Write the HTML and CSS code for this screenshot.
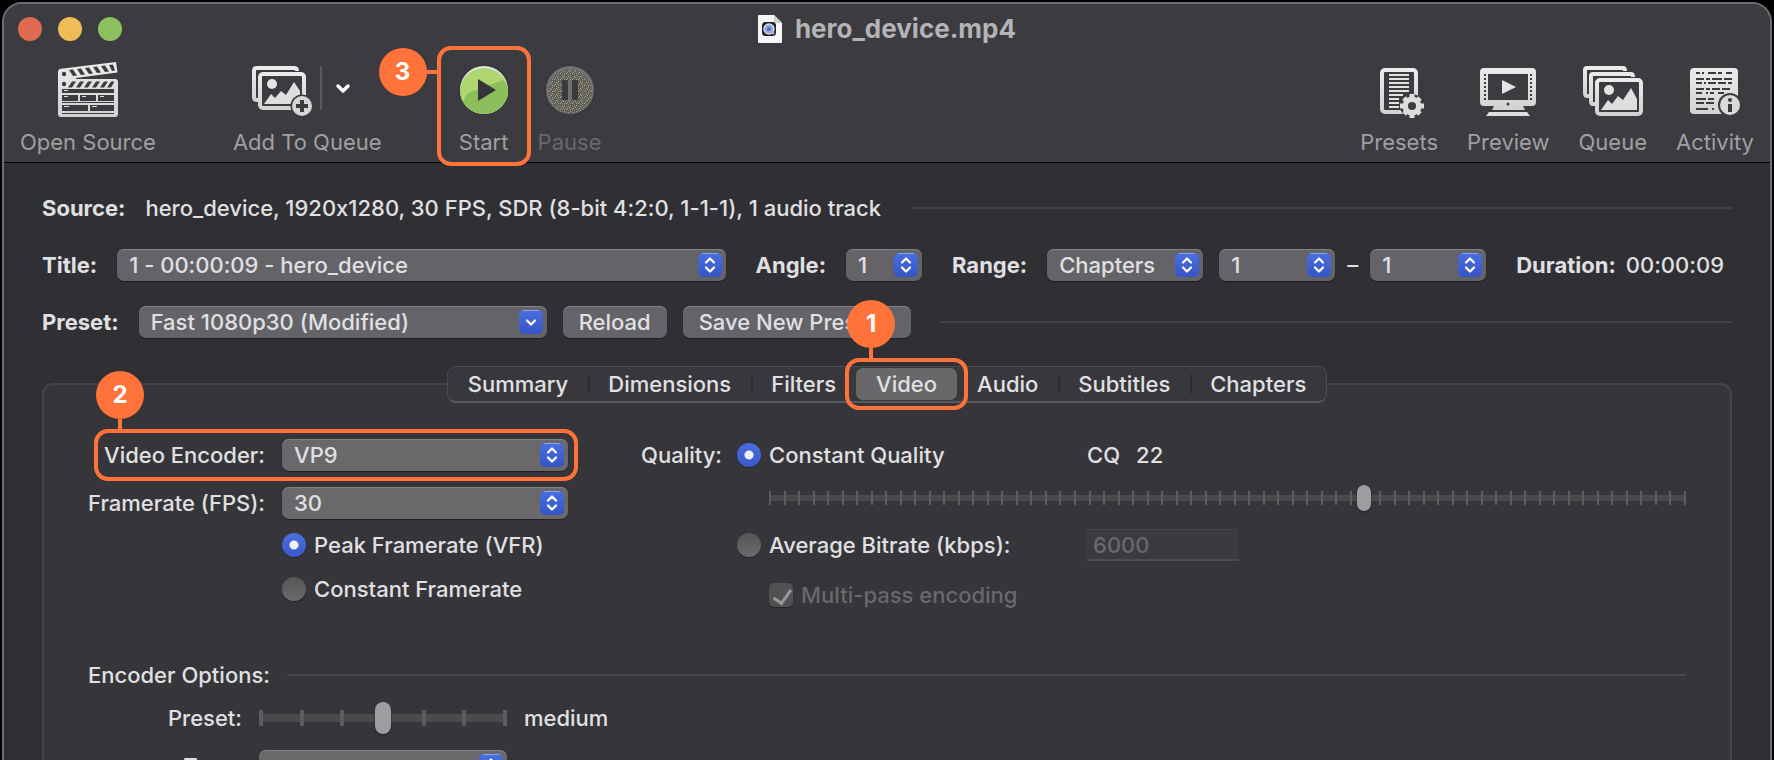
FILE: index.html
```html
<!DOCTYPE html>
<html lang="en">
<head>
    <meta charset="utf-8">
    <title>hero_device.mp4</title>
    <link rel="stylesheet" href="styles.css">
</head>
<body>
    <!-- Shared shapes -->
    <svg class="defs" width="0" height="0" aria-hidden="true">
        <defs>
            <linearGradient id="silver" x1="0" y1="0" x2="0" y2="1">
                <stop offset="0" stop-color="#ebebeb"/>
                <stop offset="1" stop-color="#d2d2d2"/>
            </linearGradient>
            <linearGradient id="blue" x1="0" y1="0" x2="0" y2="1">
                <stop offset="0" stop-color="#4a6fe0"/>
                <stop offset="1" stop-color="#3654c4"/>
            </linearGradient>
            <pattern id="speckle" width="6" height="6" patternUnits="userSpaceOnUse">
                <rect width="6" height="6" fill="#5e5e5c"/>
                <path fill="#8cbf5f" d="M0 0h1v1h-1zM3 2h1v1h-1zM1 4h1v1h-1z"/>
                <path fill="#b5684f" d="M2 0h1v1h-1zM5 3h1v1h-1zM3 5h1v1h-1z"/>
                <path fill="#a3a3a3" d="M4 1h1v1h-1zM1 2h1v1h-1zM5 5h1v1h-1z"/>
            </pattern>
            <symbol id="updown" viewBox="0 0 26 26">
                <rect x="1" y="1" width="24" height="24" rx="5" fill="url(#blue)"/>
                <path d="M5 1.500h16" stroke="#89a2ee"/>
                <path d="M9 10.500l4-4 4 4M9 15.500l4 4 4-4" fill="none" stroke="#fff" stroke-width="2.200" stroke-linecap="round" stroke-linejoin="round"/>
            </symbol>
            <symbol id="down" viewBox="0 0 26 26">
                <rect x="1" y="1" width="24" height="24" rx="5" fill="url(#blue)"/>
                <path d="M5 1.500h16" stroke="#89a2ee"/>
                <path d="M9 11.500l4 4 4-4" fill="none" stroke="#fff" stroke-width="2.200" stroke-linecap="round" stroke-linejoin="round"/>
            </symbol>
        </defs>
    </svg>

    <div class="window">
        <header class="header">
            <div class="titlebar">
                <div class="lights">
                    <button class="light close" aria-label="Close"></button>
                    <button class="light minimize" aria-label="Minimize"></button>
                    <button class="light zoom" aria-label="Zoom"></button>
                </div>
                <h1 class="title">
                    <svg width="24" height="28" viewBox="0 0 24 28" aria-hidden="true">
                        <path d="M0 1a1 1 0 0 1 1-1h15l8 8v19a1 1 0 0 1-1 1H1a1 1 0 0 1-1-1z" fill="#f6f6f6"/>
                        <path d="M16 0v8h8z" fill="#cfcfcf"/>
                        <rect x="4" y="7" width="14" height="14" rx="3.500" fill="#1f2126"/>
                        <circle cx="11" cy="14" r="5" fill="#8aa5dc" stroke="#d5dae2" stroke-width="1.500"/>
                        <path d="M11 14l5 5" stroke="#aab0bb" stroke-width="2.500"/>
                        <circle cx="11" cy="14" r="2" fill="#4c6fd2"/>
                    </svg>
                    hero_device.mp4
                </h1>
            </div>

            <div class="toolbar">
                <button class="tool">
                    <span class="tool-icon">
                        <svg width="60" height="56" viewBox="0 0 60 56" aria-hidden="true">
                            <path fill="url(#silver)" d="M0 10q0-3 3-3.300L58 0l1.500 10.500L18 16v1h39q3 0 3 3v32q0 3-3 3H3q-3 0-3-3z"/>
                            <circle cx="6" cy="12" r="2.200" fill="#3c3b3f"/>
                            <circle cx="6" cy="22" r="2.200" fill="#3c3b3f"/>
                            <path fill="#3c3b3f" d="M11 8l4-.5 4 6-4 .5zM19 7l4-.5 4 6-4 .5zM27 6l4-.5 4 6-4 .5zM35 5l4-.5 4 6-4 .5zM43 4l4-.5 4 6-4 .5zM51 3l4-.5 2 6-3 .5z"/>
                            <path fill="#3c3b3f" d="M14 19.500h4l-4 6h-4zM22 19.500h4l-4 6h-4zM30 19.500h4l-4 6h-4zM38 19.500h4l-4 6h-4zM46 19.500h4l-4 6h-4zM53 19.500h3v1l-3 5h-4z"/>
                            <path fill="#3c3b3f" d="M4 27h52v4H4zM4 33h16v6H4zM22 33h16v6H22zM40 33h16v6H40zM4 40h52v1H4zM4 43h26v6H4zM32 43h24v6H32zM4 51h52v1H4z"/>
                            <path stroke="#dedede" d="M6 28.500h4M6 34.500h4M24 34.500h4M42 34.500h4M6 44.500h5M34 44.500h5"/>
                        </svg>
                    </span>
                    Open Source
                </button>
                <button class="tool spaced">
                    <span class="tool-icon">
                        <svg width="110" height="56" viewBox="0 -4 110 56" aria-hidden="true">
                            <path d="M6 34H5q-3 0-3-3V5q0-3 3-3h37q3 0 3 3" fill="none" stroke="url(#silver)" stroke-width="4"/>
                            <rect x="8" y="8" width="44" height="34" rx="3" fill="#3c3b3f" stroke="url(#silver)" stroke-width="4"/>
                            <circle cx="20" cy="18" r="5" fill="#e4e4e4"/>
                            <path d="M12 38l7-10 4 4 6-7 5 4 8-13 6 9v13z" fill="#dedede"/>
                            <circle cx="50" cy="40" r="11.500" fill="#3c3b3f"/>
                            <circle cx="50" cy="40" r="10" fill="#d6d6d6"/>
                            <path d="M50 34v12M44 40h12" stroke="#3c3b3f" stroke-width="4"/>
                            <path d="M69 0v44" stroke="#5b5a5e" stroke-width="2"/>
                            <path d="M86 20l5 5 5-5" fill="none" stroke="#fff" stroke-width="3.500" stroke-linecap="round" stroke-linejoin="round"/>
                        </svg>
                    </span>
                    Add To Queue
                </button>
                <div class="callout callout-start spaced">
                    <button class="tool">
                        <span class="tool-icon">
                            <svg width="50" height="50" viewBox="0 0 50 50" aria-hidden="true">
                                <circle cx="25" cy="25" r="25" fill="#323135"/>
                                <circle cx="25" cy="25" r="24" fill="#e8e8e8"/>
                                <ellipse cx="25" cy="26" rx="24" ry="23" fill="#b0d672"/>
                                <path d="M4 37q2-10 16-13 15-6 25-9 8 12 1 22-8 12-21 12T4 37z" fill="#8cbf5c"/>
                                <path d="M19 14l18 11-18 11z" fill="#35343a"/>
                            </svg>
                        </span>
                        Start
                    </button>
                    <span class="badge">3</span>
                </div>
                <button class="tool" disabled>
                    <span class="tool-icon">
                        <svg width="50" height="50" viewBox="0 0 50 50" aria-hidden="true">
                            <circle cx="25" cy="25" r="25" fill="#353438"/>
                            <circle cx="25" cy="25" r="24" fill="#727274"/>
                            <circle cx="25" cy="26" r="22" fill="url(#speckle)"/>
                            <path d="M17 15h6v20h-6zM27 15h6v20h-6z" fill="#3b3a3e"/>
                            <path d="M23 15h4v20h-4z" fill="#707072"/>
                        </svg>
                    </span>
                    Pause
                </button>

                <div class="spacer"></div>

                <button class="tool">
                    <span class="tool-icon">
                        <svg width="50" height="56" viewBox="-3 -4 50 56" aria-hidden="true">
                            <rect x="5" y="4" width="34" height="42" rx="3" fill="none" stroke="url(#silver)" stroke-width="4"/>
                            <path d="M12 9h20M12 13h20M12 17h20M12 21h20M12 25h20M12 29h14M12 33h10M12 37h10M12 41h10" stroke="#e2e2e2" stroke-width="2"/>
                            <circle cx="35" cy="40" r="12" fill="#3c3b3f"/>
                            <path d="M35 28v24M23 40h24M27 32l16 16M43 32L27 48" stroke="#dcdcdc" stroke-width="5"/>
                            <circle cx="35" cy="40" r="7" fill="none" stroke="#dcdcdc" stroke-width="5"/>
                            <circle cx="35" cy="40" r="4" fill="#3c3b3f"/>
                        </svg>
                    </span>
                    Presets
                </button>
                <button class="tool">
                    <span class="tool-icon">
                        <svg width="56" height="52" viewBox="0 -4 56 52" aria-hidden="true">
                            <path fill="url(#silver)" fill-rule="evenodd" d="M4 0h48q4 0 4 4v30q0 4-4 4H43l2 4H12l2-4H4q-4 0-4-4V4q0-4 4-4zM8 6v26h40V6z"/>
                            <path d="M9 44h38l3 4H6z" fill="#dedede"/>
                            <path d="M22 12l14 7-14 7z" fill="#e4e4e4"/>
                            <path d="M5 6v26M51 6v26" stroke="#3c3b3f" stroke-width="2" stroke-dasharray="2 2"/>
                            <circle cx="28" cy="36" r="1.500" fill="#3c3b3f"/>
                        </svg>
                    </span>
                    Preview
                </button>
                <button class="tool">
                    <span class="tool-icon">
                        <svg width="60" height="52" viewBox="0 -2 60 52" aria-hidden="true">
                            <path d="M6 30H4q-2 0-2-3V4q0-2 2-2h36q2 0 2 3" fill="none" stroke="url(#silver)" stroke-width="4"/>
                            <path d="M12 38h-2q-2 0-2-3V10q0-2 2-2h38q2 0 2 3" fill="none" stroke="url(#silver)" stroke-width="4"/>
                            <rect x="14" y="14" width="44" height="34" rx="3" fill="#3c3b3f" stroke="url(#silver)" stroke-width="4"/>
                            <circle cx="26" cy="24" r="5" fill="#e4e4e4"/>
                            <path d="M18 44l7-10 4 4 6-8 5 4 8-12 6 11v11z" fill="#dedede"/>
                        </svg>
                    </span>
                    Queue
                </button>
                <button class="tool">
                    <span class="tool-icon">
                        <svg width="50" height="54" viewBox="0 -4 50 54" aria-hidden="true">
                            <rect x="0" y="1" width="48" height="46" rx="4" fill="url(#silver)"/>
                            <path d="M6 6h4M12 6h2M18 6h8M28 6h4M36 6h6M6 12h8M16 12h4M22 12h10M34 12h8M6 16h6M14 16h2M18 16h8M28 16h8M38 16h4M6 22h8M16 22h4M22 22h8M32 22h8M6 26h6M16 26h2M20 26h4M28 26h6M6 32h10M18 32h6M6 36h8M16 36h8M6 42h12M22 42h2" stroke="#3c3b3f" stroke-width="2"/>
                            <circle cx="40" cy="38" r="12" fill="#3c3b3f"/>
                            <circle cx="40" cy="38" r="10" fill="#dadada"/>
                            <circle cx="40" cy="33" r="2" fill="#3c3b3f"/>
                            <path d="M40 37v8" stroke="#3c3b3f" stroke-width="4"/>
                        </svg>
                    </span>
                    Activity
                </button>
            </div>
        </header>

        <main class="content">
            <div class="row">
                <b>Source:</b>
                <span>hero_device, 1920x1280, 30 FPS, SDR (8-bit 4:2:0, 1-1-1), 1 audio track</span>
                <hr>
            </div>

            <div class="row">
                <label for="title">Title:</label>
                <span class="popup grow">
                    <select id="title"><option>1 - 00:00:09 - hero_device</option></select>
                    <svg><use href="#updown"/></svg>
                </span>
                <label class="next" for="angle">Angle:</label>
                <span class="popup tiny">
                    <select id="angle"><option>1</option></select>
                    <svg><use href="#updown"/></svg>
                </span>
                <label class="next" for="range">Range:</label>
                <span class="popup medium">
                    <select id="range"><option>Chapters</option></select>
                    <svg><use href="#updown"/></svg>
                </span>
                <span class="popup small">
                    <select aria-label="First chapter"><option>1</option></select>
                    <svg><use href="#updown"/></svg>
                </span>
                <span class="dash">–</span>
                <span class="popup small">
                    <select aria-label="Last chapter"><option>1</option></select>
                    <svg><use href="#updown"/></svg>
                </span>
                <span class="duration"><b>Duration:</b><span>00:00:09</span></span>
            </div>

            <div class="row">
                <label for="preset">Preset:</label>
                <span class="popup preset">
                    <select id="preset"><option>Fast 1080p30 (Modified)</option></select>
                    <svg><use href="#down"/></svg>
                </span>
                <button class="push">Reload</button>
                <button class="push save">Save New Preset</button>
                <hr>
            </div>

            <nav class="tabs">
                <button class="tab">Summary</button>
                <button class="tab">Dimensions</button>
                <button class="tab">Filters</button>
                <div class="callout callout-tab">
                    <button class="tab selected">Video</button>
                    <span class="badge">1</span>
                </div>
                <button class="tab">Audio</button>
                <button class="tab">Subtitles</button>
                <button class="tab">Chapters</button>
            </nav>

            <section class="panel">
                <div class="columns">
                    <div class="encoder">
                        <div class="callout callout-encoder">
                            <label for="encoder">Video Encoder:</label>
                            <span class="popup">
                                <select id="encoder"><option>VP9</option></select>
                                <svg><use href="#updown"/></svg>
                            </span>
                            <span class="badge">2</span>
                        </div>
                        <label for="fps">Framerate (FPS):</label>
                        <span class="popup">
                            <select id="fps"><option>30</option></select>
                            <svg><use href="#updown"/></svg>
                        </span>
                        <label class="choice"><input type="radio" name="rate" checked>Peak Framerate (VFR)</label>
                        <label class="choice"><input type="radio" name="rate">Constant Framerate</label>
                    </div>

                    <div class="quality">
                        <span>Quality:</span>
                        <label class="choice"><input type="radio" name="quality" checked>Constant Quality</label>
                        <span class="cq"><span>CQ</span><span>22</span></span>
                        <input class="slider cq-slider" type="range" min="0" max="63" value="41" aria-label="Constant quality">
                        <label class="choice"><input type="radio" name="quality">Average Bitrate (kbps):</label>
                        <input class="bitrate" type="text" value="6000" aria-label="Average bitrate" disabled>
                        <label class="choice multipass"><input type="checkbox" checked disabled>Multi-pass encoding</label>
                    </div>
                </div>

                <div class="options-head">
                    <span>Encoder Options:</span>
                    <hr>
                </div>
                <div class="options">
                    <label for="speed">Preset:</label>
                    <input class="slider speed-slider" id="speed" type="range" min="0" max="6" value="3">
                    <span>medium</span>
                    <label for="tune">Tune:</label>
                    <span class="popup">
                        <select id="tune"><option></option></select>
                        <svg><use href="#updown"/></svg>
                    </span>
                </div>
            </section>
        </main>
    </div>
</body>
</html>
```
FILE: styles.css
```css
* {
    box-sizing: border-box;
}
body {
    margin: 0;
    padding: 2px;
    height: 100vh;
    overflow: hidden;
    background-color: #000;
    color: #e0e0e2;
    font-family: Inter, "Liberation Sans", sans-serif;
    font-size: 22px;
    font-weight: 500;
    font-feature-settings: "calt" 0;
    line-height: 28px;
}
button, input, select {
    margin: 0;
    padding: 0;
    border: 0;
    background: none;
    color: inherit;
    font: inherit;
}
.defs {
    position: absolute;
}
.window {
    border: 2px solid #6d6c70;
    border-radius: 20px;
    overflow: hidden;
    background-color: #302f33;
}

/* Title bar and toolbar */
.header {
    background-color: #3c3b3f;
    border-bottom: 1px solid #000;
}
.titlebar {
    display: grid;
    grid-template-columns: 1fr auto 1fr;
    align-items: center;
    height: 50px;
    padding: 0 14px;
}
.lights {
    display: flex;
    gap: 16px;
}
.light {
    width: 24px;
    height: 24px;
    border-radius: 50%;
}
.close {
    background-color: #de6b50;
}
.minimize {
    background-color: #eebd58;
}
.zoom {
    background-color: #8cc060;
}
.title {
    display: flex;
    align-items: center;
    gap: 13px;
    margin: 0;
    color: #b4b3b6;
    font-size: 26px;
    font-weight: 700;
}
.toolbar {
    display: flex;
    gap: 29px;
    padding: 6px 16px;
    font-weight: 400;
}
.tool {
    display: flex;
    flex-direction: column;
    align-items: center;
    gap: 8px;
    color: #a09fa2;
    white-space: nowrap;
}
.tool:disabled {
    color: #69686c;
}
.tool-icon {
    display: flex;
    align-items: center;
    height: 60px;
}
.spaced {
    margin-left: 48px;
}
.spacer {
    flex: 1;
}

/* Numbered callouts */
.callout {
    position: relative;
}
.callout::before {
    content: "";
    position: absolute;
    border: 4px solid #ff733b;
    border-radius: 14px;
    pointer-events: none;
    z-index: 2;
}
.callout::after {
    content: "";
    position: absolute;
    background-color: #ff733b;
    z-index: 2;
}
.badge {
    position: absolute;
    z-index: 3;
    width: 48px;
    height: 48px;
    border-radius: 50%;
    background-color: #ff733b;
    color: #fff;
    font-size: 24px;
    font-weight: 700;
    line-height: 48px;
    text-align: center;
}
.callout-start::before {
    inset: -14px -22px -10px;
}
.callout-start::after {
    left: -35px;
    top: 10px;
    width: 14px;
    height: 4px;
}
.callout-start .badge {
    left: -80px;
    top: -12px;
}
.callout-tab::before {
    inset: -10px -11px;
}
.callout-tab::after {
    left: 13px;
    top: -20px;
    width: 4px;
    height: 12px;
}
.callout-tab .badge {
    left: -9px;
    top: -68px;
}
.callout-encoder::before {
    inset: -2px -10px -2px 6px;
}
.callout-encoder::after {
    left: 30px;
    top: -12px;
    width: 4px;
    height: 12px;
}
.callout-encoder .badge {
    left: 8px;
    top: -60px;
}

/* Source, title and preset rows */
.content {
    padding: 29px 38px 0;
}
.row {
    display: flex;
    align-items: center;
    gap: 16px;
    height: 32px;
    margin-bottom: 25px;
    white-space: nowrap;
}
.row > label, .row > b {
    margin-right: 4px;
}
.row > label, b {
    font-weight: 700;
}
.row .next {
    margin-left: 14px;
}
.duration {
    display: flex;
    gap: 10px;
    margin: 0 8px 0 14px;
}
.dash {
    margin: 0 -4px;
}
hr {
    flex: 1;
    height: 2px;
    margin: 0 0 0 14px;
    border: 0;
    background-color: #414044;
}
.popup {
    position: relative;
    display: block;
    height: 32px;
}
.popup select {
    display: block;
    width: 100%;
    height: 32px;
    padding: 0 34px 0 12px;
    appearance: none;
    border-radius: 7px;
    background-color: #646368;
    box-shadow: inset 0 1px #828285, 0 1px 1px #1e1d20;
}
.panel .popup select {
    background-color: #69696b;
}
.popup svg {
    position: absolute;
    top: 3px;
    right: 3px;
    width: 26px;
    height: 26px;
    pointer-events: none;
}
.grow {
    flex: 1;
}
.tiny {
    width: 76px;
}
.small {
    width: 116px;
}
.medium {
    width: 156px;
}
.preset {
    width: 408px;
}
.push {
    height: 32px;
    padding: 0 16px;
    border-radius: 7px;
    background-color: #646368;
    box-shadow: inset 0 1px #828285, 0 1px 1px #1e1d20;
}
.save {
    width: 228px;
    text-align: left;
}

/* Tabs */
.tabs {
    position: relative;
    z-index: 1;
    display: flex;
    align-items: center;
    width: max-content;
    height: 37px;
    margin: 28px auto 0;
    border: 1px solid #4b4a4e;
    border-bottom: 2px solid #59585c;
    border-radius: 9px;
    background-color: #38373b;
}
.tab {
    height: 32px;
    padding: 0 20px;
    border-radius: 7px;
}
.tab + .tab {
    background: linear-gradient(#2d2c30, #2d2c30) left center / 2px 20px no-repeat;
}
.selected {
    background-color: #68686a;
}

/* Video settings */
.panel {
    margin-top: -20px;
    padding: 46px 44px 0;
    border: 2px solid #444347;
    border-radius: 11px;
    background-color: #363539;
    white-space: nowrap;
}
.columns {
    display: flex;
    gap: 73px;
}
.encoder {
    display: grid;
    grid-template-columns: minmax(177px, max-content) 286px;
    grid-template-rows: 48px 48px 36px 52px;
    column-gap: 17px;
    align-items: center;
}
.encoder > label, .callout-encoder > label {
    text-align: right;
}
.callout-encoder {
    grid-column: 1 / 3;
    display: grid;
    grid-template-columns: subgrid;
    align-items: center;
    height: 48px;
}
.encoder > .choice {
    grid-column: 2;
}
.choice {
    display: flex;
    align-items: center;
    gap: 8px;
}
.quality {
    flex: 1;
    display: grid;
    grid-template-columns: 80px 334px 1fr;
    grid-template-rows: 48px 38px 56px 44px;
    column-gap: 16px;
    align-items: center;
}
.quality > .choice {
    grid-column: 2;
}
.cq {
    display: flex;
    gap: 16px;
}
.cq-slider {
    grid-column: 2 / 4;
    margin-left: 32px;
}
.multipass {
    padding-left: 32px;
    color: #69686c;
}
input[type="radio"], input[type="checkbox"] {
    flex: none;
    width: 24px;
    height: 24px;
    appearance: none;
    border-radius: 50%;
    background: linear-gradient(#555556, #6b6b6d);
    box-shadow: 0 1px 1px #242327;
}
input[type="radio"]:checked {
    background: radial-gradient(circle, #f0f0f2 4px, transparent 5px), linear-gradient(#4a6ee0, #3a58cc);
}
input[type="checkbox"] {
    position: relative;
    border-radius: 5px;
    background: #515052;
}
input[type="checkbox"]::after {
    content: "";
    position: absolute;
    left: 8px;
    top: 3px;
    width: 8px;
    height: 15px;
    border: solid #98979a;
    border-width: 0 3px 3px 0;
    transform: rotate(35deg);
}
.bitrate {
    width: 152px;
    height: 32px;
    padding: 0 6px;
    border-top: 1px solid #434246;
    border-bottom: 2px solid #4d4c50;
    background-color: #3b3a3e;
    color: #69686c;
}
.slider {
    min-width: 0;
    height: 32px;
    appearance: none;
}
.cq-slider {
    background:
        repeating-linear-gradient(90deg, #5d5d5f 0 2px, transparent 2px calc((100% - 2px) / 63)) center / 100% 14px no-repeat,
        linear-gradient(#4a494b, #4a494b) center / 100% 6px no-repeat;
}
.speed-slider {
    background:
        repeating-linear-gradient(90deg, #5d5d5f 0 4px, transparent 4px calc((100% - 4px) / 6)) center / 100% 16px no-repeat,
        linear-gradient(#4a494b, #4a494b) center / 100% 8px no-repeat;
}
.slider::-webkit-slider-thumb {
    appearance: none;
    width: 14px;
    height: 26px;
    border-radius: 7px;
    background-color: #9d9c9f;
    box-shadow: 0 1px 2px #222125;
}
.speed-slider::-webkit-slider-thumb {
    width: 16px;
    height: 32px;
    border-radius: 8px;
}

/* Encoder options */
.options-head {
    display: flex;
    align-items: center;
    height: 38px;
    margin-top: 39px;
}
.options-head hr {
    margin-left: 17px;
    background-color: #48474b;
}
.options {
    display: grid;
    grid-template-columns: 154px 248px 1fr;
    grid-auto-rows: 48px;
    column-gap: 17px;
    align-items: center;
}
.options label {
    text-align: right;
}
.options .popup {
    grid-column: 2;
}
```
